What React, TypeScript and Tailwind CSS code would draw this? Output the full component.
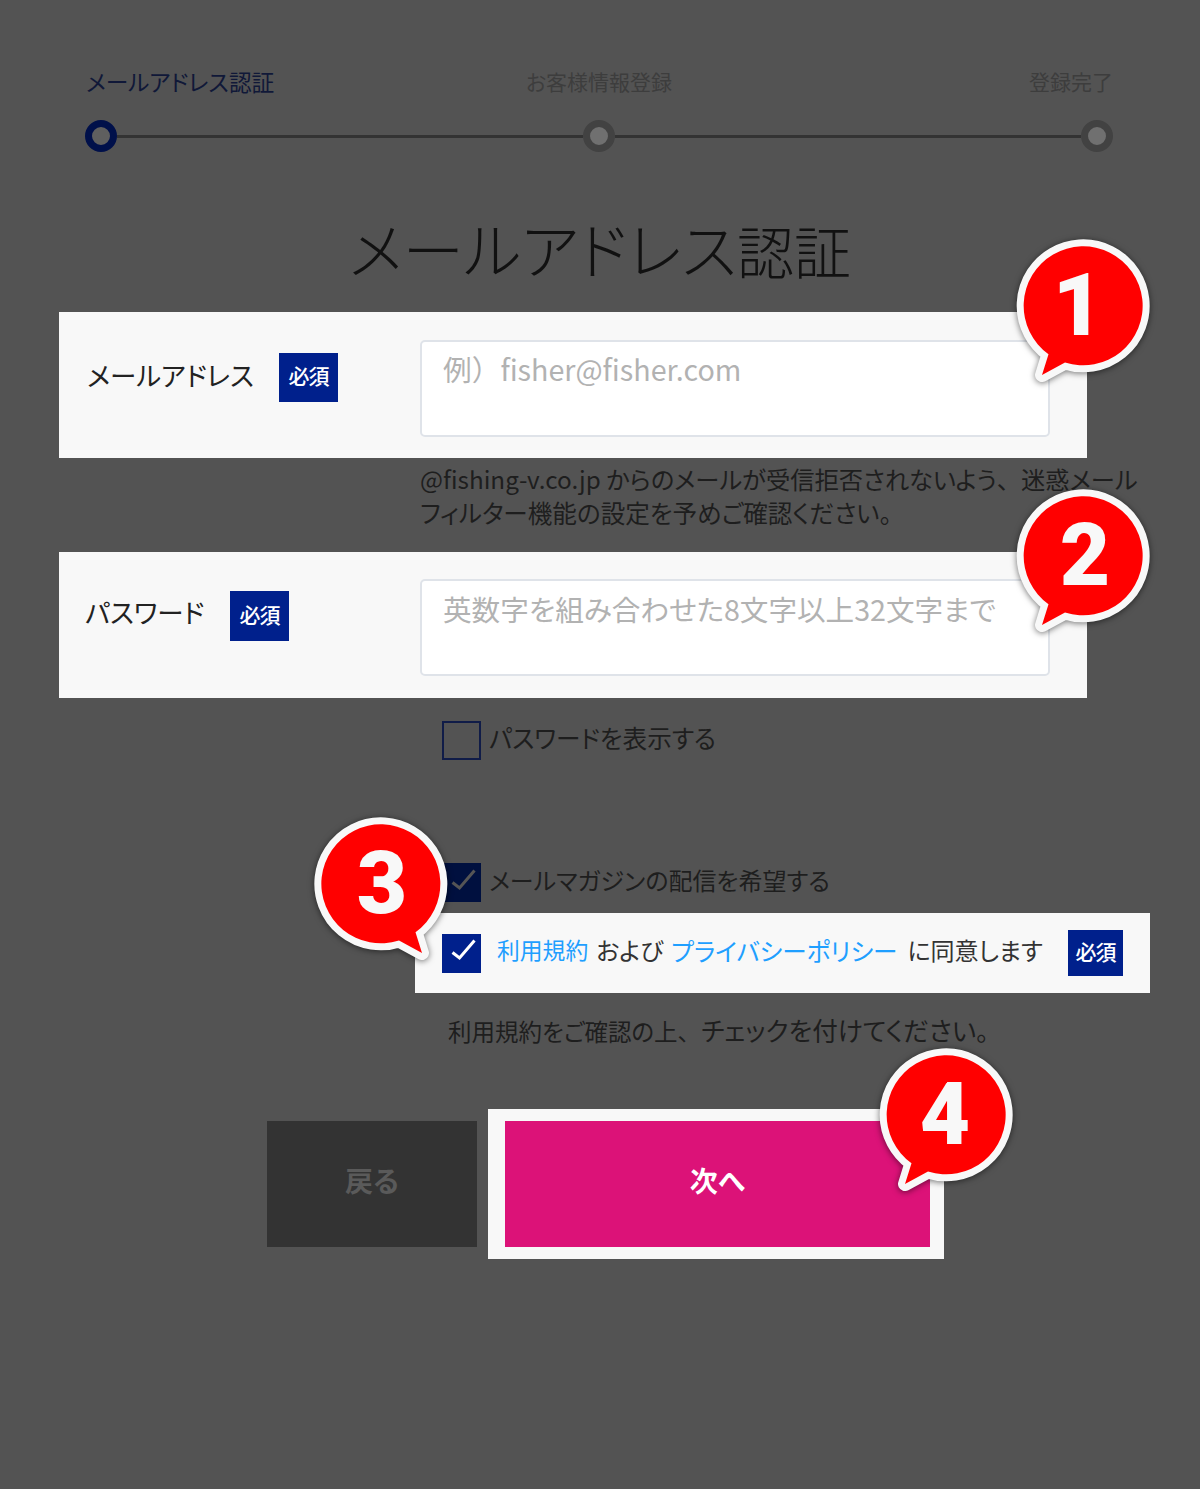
const font = "font-['Noto_Sans_CJK_JP','Noto_Sans',sans-serif]";
const fw = "[font-feature-settings:normal]";

function Required({ className }: { className: string }) {
  return (
    <span className={`flex items-center justify-center pb-[3px] bg-[#00208c] text-[21px] font-medium text-white [font-feature-settings:'palt'] tracking-[-1px] ${className}`}>
      必須
    </span>
  );
}

function Check({ color }: { color: string }) {
  return (
    <svg width="38" height="38" viewBox="0 0 38 38" fill="none" aria-hidden="true">
      <path d="M9.5 18.5 L16.5 24 L31.5 6.5" stroke={color} strokeWidth="3" />
    </svg>
  );
}

function Step({ active }: { active?: boolean }) {
  return (
    <span className={`w-[32px] h-[32px] rounded-full border-[7px] shrink-0 ${active ? "border-[#00104a] bg-[#5f5f5f]" : "border-[#424242] bg-[#707070]"}`} />
  );
}

function Bubble({ n, left, top, flip, nudge }: { n: string; left: string; top: string; flip?: boolean; nudge?: string }) {
  const d = "M-17 57.5 A59.5 59.5 0 1 0 -33.5 49.2 L-40 70 Z";
  return (
    <div className={`absolute w-[150px] h-[170px] ${left} ${top}`}>
      <svg width="150" height="170" viewBox="-75 -75 150 170" className="absolute inset-0 drop-shadow-[0_1px_3px_rgba(0,0,0,0.55)]" aria-hidden="true">
        <g transform={flip ? "scale(-1 1)" : undefined}>
          <path d={d} fill="#f8f8f8" stroke="#f8f8f8" strokeWidth="14" strokeLinejoin="round" />
          <path d={d} fill="#ff0000" />
        </g>
      </svg>
      <span className={`absolute left-0 top-0 w-[150px] h-[150px] flex items-center justify-center text-[87px] leading-none font-black text-[#f8f8f8] font-['Roboto',sans-serif] ${nudge ?? ""}`}>
        {n}
      </span>
    </div>
  );
}

export default function App() {
  return (
    <div className={`relative w-[1200px] h-[1489px] overflow-hidden bg-[#535353] ${font} [font-feature-settings:'palt'] text-[#1e1e1e]`}>
      {/* Stepper */}
      <div className="ml-[85px] w-[1028px] pt-[66px]">
        <div className="grid grid-cols-3 h-[30px] text-[21px] leading-[30px] text-[#3d3d3d]">
          <span className="text-[22.7px] pl-[1px] pt-[1px] text-[#101838] whitespace-nowrap">メールアドレス認証</span>
          <span className="text-center">お客様情報登録</span>
          <span className="text-right">登録完了</span>
        </div>
        <div className="flex items-center mt-[24px]">
          <Step active />
          <span className="flex-1 h-[3px] bg-[#333]" />
          <Step />
          <span className="flex-1 h-[3px] bg-[#333]" />
          <Step />
        </div>
      </div>

      <h1 className="mt-[54px] h-[84px] text-center text-[61.6px] leading-[84px] font-light text-[#111]">
        メールアドレス<span className="text-[57px]">認証</span>
      </h1>

      {/* Email */}
      <div className="ml-[59px] mt-[22px] w-[1028px] h-[146px] bg-[#f8f8f8] flex">
        <div className="w-[361px] pl-[28px] pt-[41px] flex items-start">
          <span className="w-[192px] shrink-0 text-[26.5px] leading-[46px] -mt-[1px] text-[#222]">メールアドレス</span>
          <Required className="w-[59px] h-[49px]" />
        </div>
        <div className="mt-[28px] w-[630px] h-[97px] bg-white border-2 border-[#dfe3e9] rounded-[5px] pl-[21px] pt-[4px] text-[28.7px] leading-[46px] text-[#b2b2b2]">
          例<span className={fw}>）</span>fisher@fisher.com
        </div>
      </div>

      <div className="ml-[420px] mt-[4px] w-[760px] h-[68px] text-[24.3px] leading-[34px]">
        <p className="h-[34px]">
          @fishing-v.co.jp からのメールが受信拒否されないよう<span className={fw}>、</span>迷惑メール
        </p>
        <p className="h-[34px] text-[24.6px] -mt-[1px]">フィルター機能の設定を予めご確認ください。</p>
      </div>

      {/* Password */}
      <div className="ml-[59px] mt-[22px] w-[1028px] h-[146px] bg-[#f8f8f8] flex">
        <div className="w-[361px] pl-[26px] pt-[39px] flex items-start">
          <span className="w-[145px] shrink-0 text-[26.5px] leading-[46px] -mt-[2px] text-[#222]">パスワード</span>
          <Required className="w-[59px] h-[50px]" />
        </div>
        <div className="mt-[27px] w-[630px] h-[97px] bg-white border-2 border-[#dfe3e9] rounded-[5px] pl-[21px] pt-[5px] text-[28.6px] leading-[46px] text-[#b2b2b2]">
          英数字を組み合わせた8文字以上32文字まで
        </div>
      </div>

      <div className="ml-[442px] mt-[23px] flex items-center gap-[8px] h-[39px]">
        <span className="w-[39px] h-[39px] border-2 border-[#101c48]" />
        <span className="text-[24.6px] -mt-[6px]">パスワードを表示する</span>
      </div>

      <div className="ml-[442px] mt-[103px] flex items-center gap-[8px] h-[39px]">
        <span className="w-[39px] h-[39px] bg-[#00103f] flex items-center justify-center">
          <Check color="#555" />
        </span>
        <span className="text-[24px] -mt-[6px]">メールマガジンの配信を希望する</span>
      </div>

      <div className="ml-[415px] mt-[11px] w-[735px] h-[80px] bg-[#f8f8f8] flex items-center pl-[27px]">
        <span className="w-[39px] h-[39px] bg-[#00208c] flex items-center justify-center">
          <Check color="#fff" />
        </span>
        <span className="ml-[16px] -mt-[6px] text-[24px] text-[#333] whitespace-nowrap flex items-center">
          <span className="text-[#1f9fff] text-[22.8px]">利用規約</span>
          <span className="ml-[8px]">および</span>
          <span className="ml-[8px] text-[#1f9fff] text-[24.6px]">プライバシーポリシー</span>
          <span className="ml-[10px]">に同意します</span>
        </span>
        <Required className="absolute left-[1068px] w-[55px] h-[46px]" />
      </div>

      <div className="ml-[448px] mt-[19px] h-[36px] text-[23.5px] leading-[36px] whitespace-nowrap">
        利用規約をご確認の上<span className={fw}>、</span><span className="text-[25.6px]">チェックを付けてください。</span>
      </div>

      {/* Buttons */}
      <div className="ml-[267px] mt-[61px] flex items-center gap-[11px]">
        <div className="w-[210px] h-[126px] bg-[#333] flex items-center justify-center pb-[8px] text-[28px] font-bold text-[#5a5a5a]">
          戻る
        </div>
        <div className="w-[456px] h-[150px] bg-[#f8f8f8] pl-[17px] pr-[14px] py-[12px]">
          <div className="h-full bg-[#dc1278] flex items-center justify-center pb-[8px] text-[28px] font-bold text-white">
            次へ
          </div>
        </div>
      </div>

      <Bubble n="1" left="left-[1007px]" top="top-[230px]" nudge="-translate-x-[4px]" />
      <Bubble n="2" left="left-[1007px]" top="top-[480px]" nudge="translate-x-[3px]" />
      <Bubble n="3" left="left-[307px]" top="top-[808px]" flip />
      <Bubble n="4" left="left-[870px]" top="top-[1039px]" />
    </div>
  );
}
